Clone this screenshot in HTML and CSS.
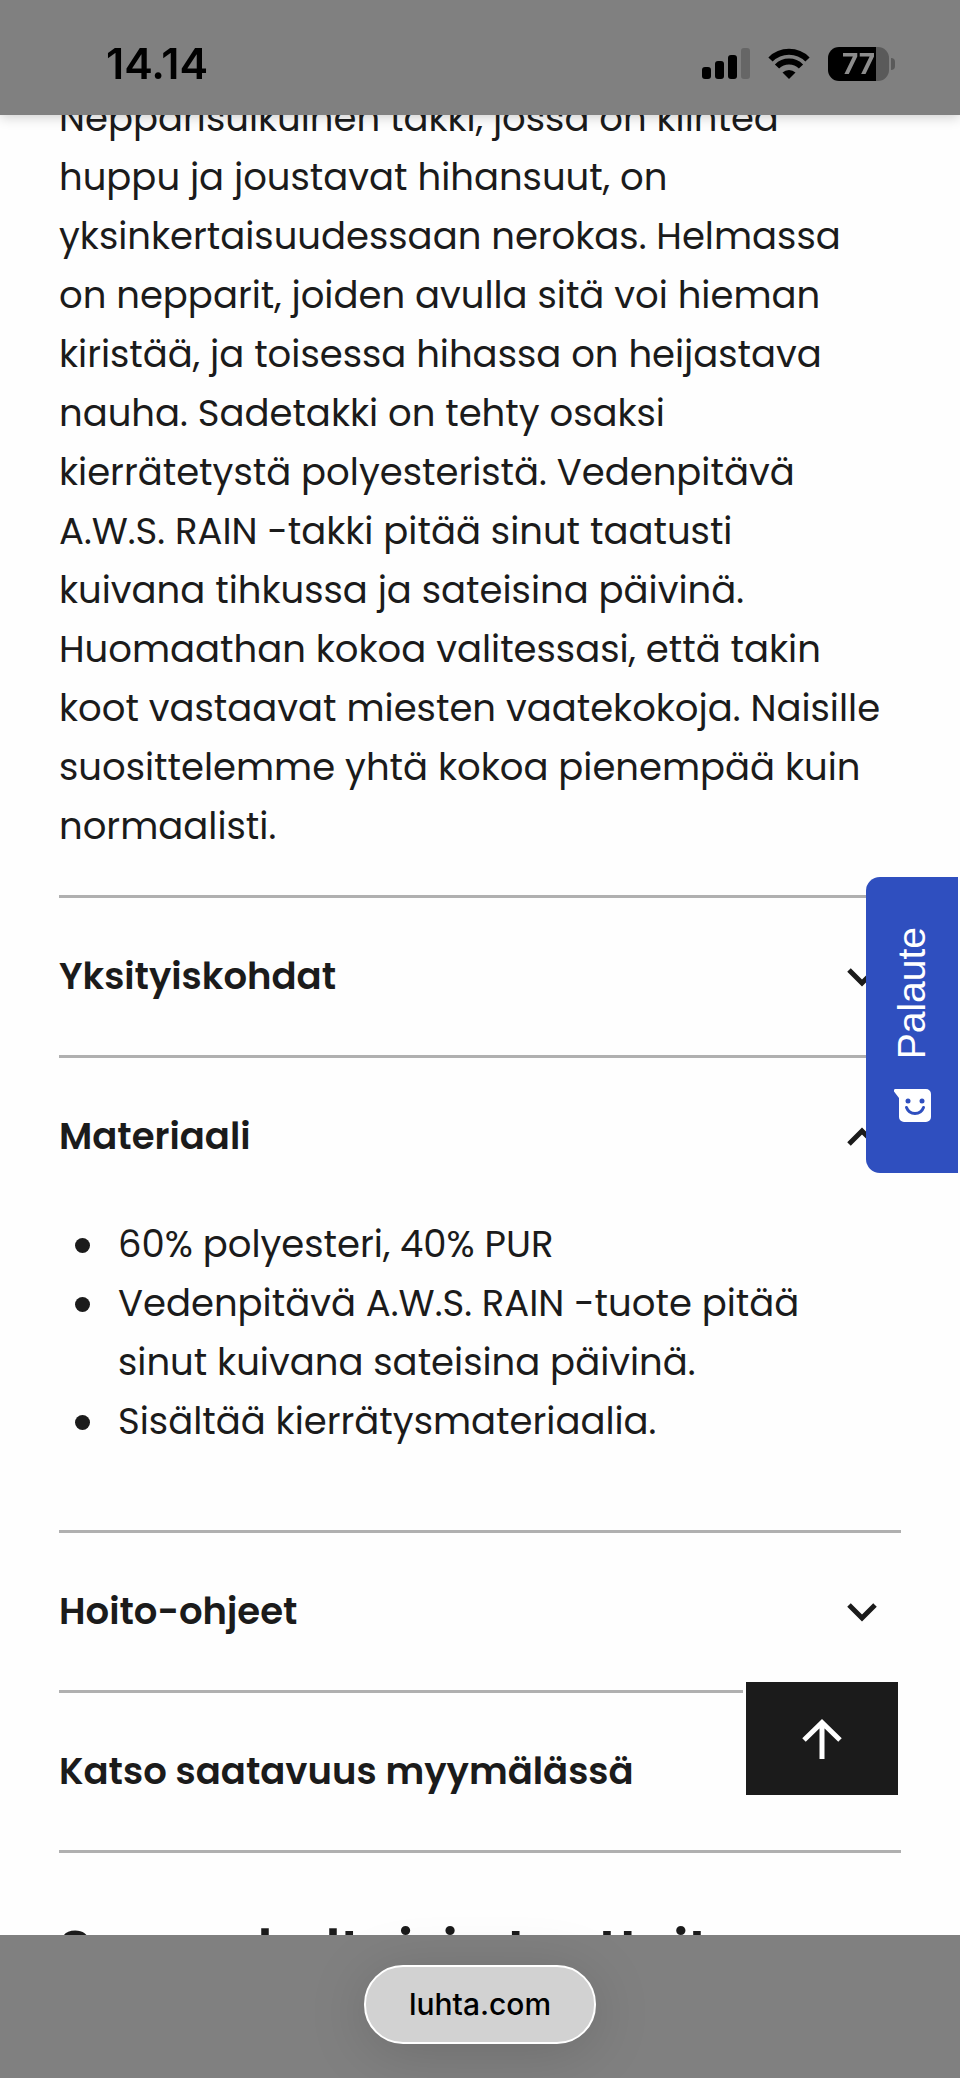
FILE: index.html
```html
<!DOCTYPE html>
<html lang="fi">
<head>
	<meta charset="utf-8">
	<meta name="viewport" content="width=device-width, initial-scale=1">
	<title>Luhta</title>
	<link rel="stylesheet" href="styles.css">
</head>
<body>

	<header class="status-bar">
		<span class="clock">14.14</span>
		<div class="status-icons">
			<svg width="48" height="32" viewBox="0 0 48 32">
				<rect x="0" y="19" width="9" height="12" rx="3"/>
				<rect x="13" y="13" width="9" height="18" rx="3"/>
				<rect x="26" y="7" width="9" height="24" rx="3"/>
				<rect x="39" y="0" width="9" height="31" rx="3" fill="#666"/>
			</svg>
			<svg width="42" height="32" viewBox="0 0 42 32">
				<g fill="none" stroke="#000" stroke-width="6">
					<path d="M2.5 11.5a26 26 0 0 1 37 0"/>
					<path d="M9 18.5a17 17 0 0 1 24 0"/>
				</g>
				<path d="M21 31l-6.500-6.500a9.500 9.500 0 0 1 13 0z"/>
			</svg>
			<div class="battery">
				<span class="battery-level">77</span>
				<span class="battery-tip"></span>
			</div>
		</div>
	</header>

	<main class="product">
		<p class="description">Nepparisulkuinen takki, jossa on kiinteä<br>
			huppu ja joustavat hihansuut, on<br>
			yksinkertaisuudessaan nerokas. Helmassa<br>
			on nepparit, joiden avulla sitä voi hieman<br>
			kiristää, ja toisessa hihassa on heijastava<br>
			nauha. Sadetakki on tehty osaksi<br>
			kierrätetystä polyesteristä. Vedenpitävä<br>
			A.W.S. RAIN -takki pitää sinut taatusti<br>
			kuivana tihkussa ja sateisina päivinä.<br>
			Huomaathan kokoa valitessasi, että takin<br>
			koot vastaavat miesten vaatekokoja. Naisille<br>
			suosittelemme yhtä kokoa pienempää kuin<br>
			normaalisti.</p>

		<section class="panel">
			<button class="panel-header" type="button" aria-expanded="false">
				Yksityiskohdat
				<svg class="chevron" width="30" height="20" viewBox="0 0 30 20"><path d="M2 3l13 13 13-13"/></svg>
			</button>
		</section>

		<section class="panel">
			<button class="panel-header" type="button" aria-expanded="true">
				Materiaali
				<svg class="chevron" width="30" height="20" viewBox="0 0 30 20"><path d="M2 17l13-13 13 13"/></svg>
			</button>
			<ul class="panel-list">
				<li>60% polyesteri, 40% PUR</li>
				<li>Vedenpitävä A.W.S. RAIN -tuote pitää<br>sinut kuivana sateisina päivinä.</li>
				<li>Sisältää kierrätysmateriaalia.</li>
			</ul>
		</section>

		<section class="panel">
			<button class="panel-header" type="button" aria-expanded="false">
				Hoito-ohjeet
				<svg class="chevron" width="30" height="20" viewBox="0 0 30 20"><path d="M2 3l13 13 13-13"/></svg>
			</button>
		</section>

		<section class="panel panel-last">
			<button class="panel-header" type="button">Katso saatavuus myymälässä</button>
		</section>

		<h2 class="related">Samankaltaisia tuotteita</h2>
	</main>

	<button class="feedback" type="button">
		<span class="feedback-label">Palaute</span>
		<svg width="38" height="34" viewBox="0 0 38 34">
			<path fill="#fff" d="M2 0h31a5 5 0 0 1 5 5v23a5 5 0 0 1-5 5H11a5 5 0 0 1-5-5V9L1 2.500Q.5 0 2 0z"/>
			<circle cx="15" cy="12" r="2.500" fill="#2f4fbf"/>
			<circle cx="29" cy="12" r="2.500" fill="#2f4fbf"/>
			<path d="M13.500 18.500c3 8 14 8 17 0" fill="none" stroke="#2f4fbf" stroke-width="3" stroke-linecap="round"/>
		</svg>
	</button>

	<button class="to-top" type="button" aria-label="Takaisin ylös">
		<svg width="40" height="40" viewBox="0 0 40 40"><path d="M20 40V4M2 21L20 3.500 38 21"/></svg>
	</button>

	<footer class="browser-bar">
		<a class="address" href="#">luhta.com</a>
	</footer>

</body>
</html>
```
FILE: styles.css
```css
* {
	box-sizing: border-box;
}

body {
	margin: 0;
	background-color: #fefefe;
	color: #1b1b1b;
	font-family: Poppins, Inter, sans-serif;
	font-size: 37px;
	line-height: 59px;
}

button {
	border: 0;
	padding: 0;
	background: none;
	color: inherit;
	font: inherit;
	cursor: pointer;
}

/* status bar */

.status-bar {
	position: fixed;
	z-index: 2;
	top: 0;
	left: 0;
	right: 0;
	height: 115px;
	padding: 12px 65px 0 106px;
	display: flex;
	align-items: center;
	justify-content: space-between;
	background-color: #808080;
	box-shadow: 0 2px 12px rgba(0, 0, 0, 0.2);
	color: #000;
	font-family: Inter, sans-serif;
}

.clock {
	font-size: 43px;
	font-weight: 600;
}

.status-icons {
	display: flex;
	align-items: center;
	gap: 18px;
}

.battery {
	display: flex;
	align-items: center;
	gap: 2px;
}

.battery-level {
	width: 61px;
	height: 34px;
	border-radius: 11px;
	background: linear-gradient(to right, #000 78%, #5a5a5a 78%);
	color: #8c8c8c;
	font-size: 28px;
	font-weight: 700;
	line-height: 34px;
	text-align: center;
}

.battery-tip {
	width: 4px;
	height: 12px;
	border-radius: 0 4px 4px 0;
	background-color: #5a5a5a;
}

/* product information */

.product {
	padding: 89px 59px 143px;
}

.description {
	margin: 0 0 39px;
}

.panel {
	border-top: 3px solid #b0b0b0;
}

.panel-last {
	border-bottom: 3px solid #b0b0b0;
}

.panel-header {
	width: 100%;
	height: 157px;
	padding-right: 24px;
	display: flex;
	align-items: center;
	justify-content: space-between;
	font-weight: 600;
	text-align: left;
}

.chevron {
	fill: none;
	stroke: #1b1b1b;
	stroke-width: 5;
}

.panel-list {
	margin: 0;
	padding: 0 0 79px 59px;
	list-style: none;
}

.panel-list li::before {
	content: "";
	display: inline-block;
	width: 15px;
	height: 15px;
	margin: 0 28px 2px -43px;
	border-radius: 50%;
	background-color: #1b1b1b;
	vertical-align: middle;
}

.related {
	margin: 61px 0 0;
	font-size: 54px;
	font-weight: 600;
	line-height: 72px;
}

/* floating buttons */

.feedback {
	position: fixed;
	z-index: 1;
	top: 877px;
	right: 2px;
	width: 92px;
	height: 296px;
	display: flex;
	flex-direction: column;
	align-items: center;
	justify-content: center;
	gap: 30px;
	border-radius: 14px 0 0 14px;
	background-color: #2f4fbf;
	color: #fff;
	font-family: "Liberation Sans", sans-serif;
	font-size: 39px;
	line-height: 44px;
}

.feedback-label {
	writing-mode: vertical-rl;
	transform: rotate(180deg);
}

.to-top {
	position: fixed;
	z-index: 1;
	right: 59px;
	bottom: 280px;
	width: 158px;
	height: 119px;
	display: flex;
	align-items: center;
	justify-content: center;
	border: 3px solid #fefefe;
	background-color: #1b1b1b;
}

.to-top path {
	fill: none;
	stroke: #fff;
	stroke-width: 5;
}

/* browser bar */

.browser-bar {
	position: fixed;
	z-index: 2;
	left: 0;
	right: 0;
	bottom: 0;
	height: 143px;
	padding-top: 30px;
	display: flex;
	align-items: flex-start;
	justify-content: center;
	background-color: #808080;
}

.address {
	padding: 8px 43px;
	border: 2px solid #fff;
	border-radius: 39px;
	background-color: #d2d2d2;
	box-shadow: 0 8px 60px rgba(0, 0, 0, 0.15);
	color: #000;
	font-family: Inter, sans-serif;
	font-size: 30px;
	font-weight: 500;
	text-decoration: none;
}
```
